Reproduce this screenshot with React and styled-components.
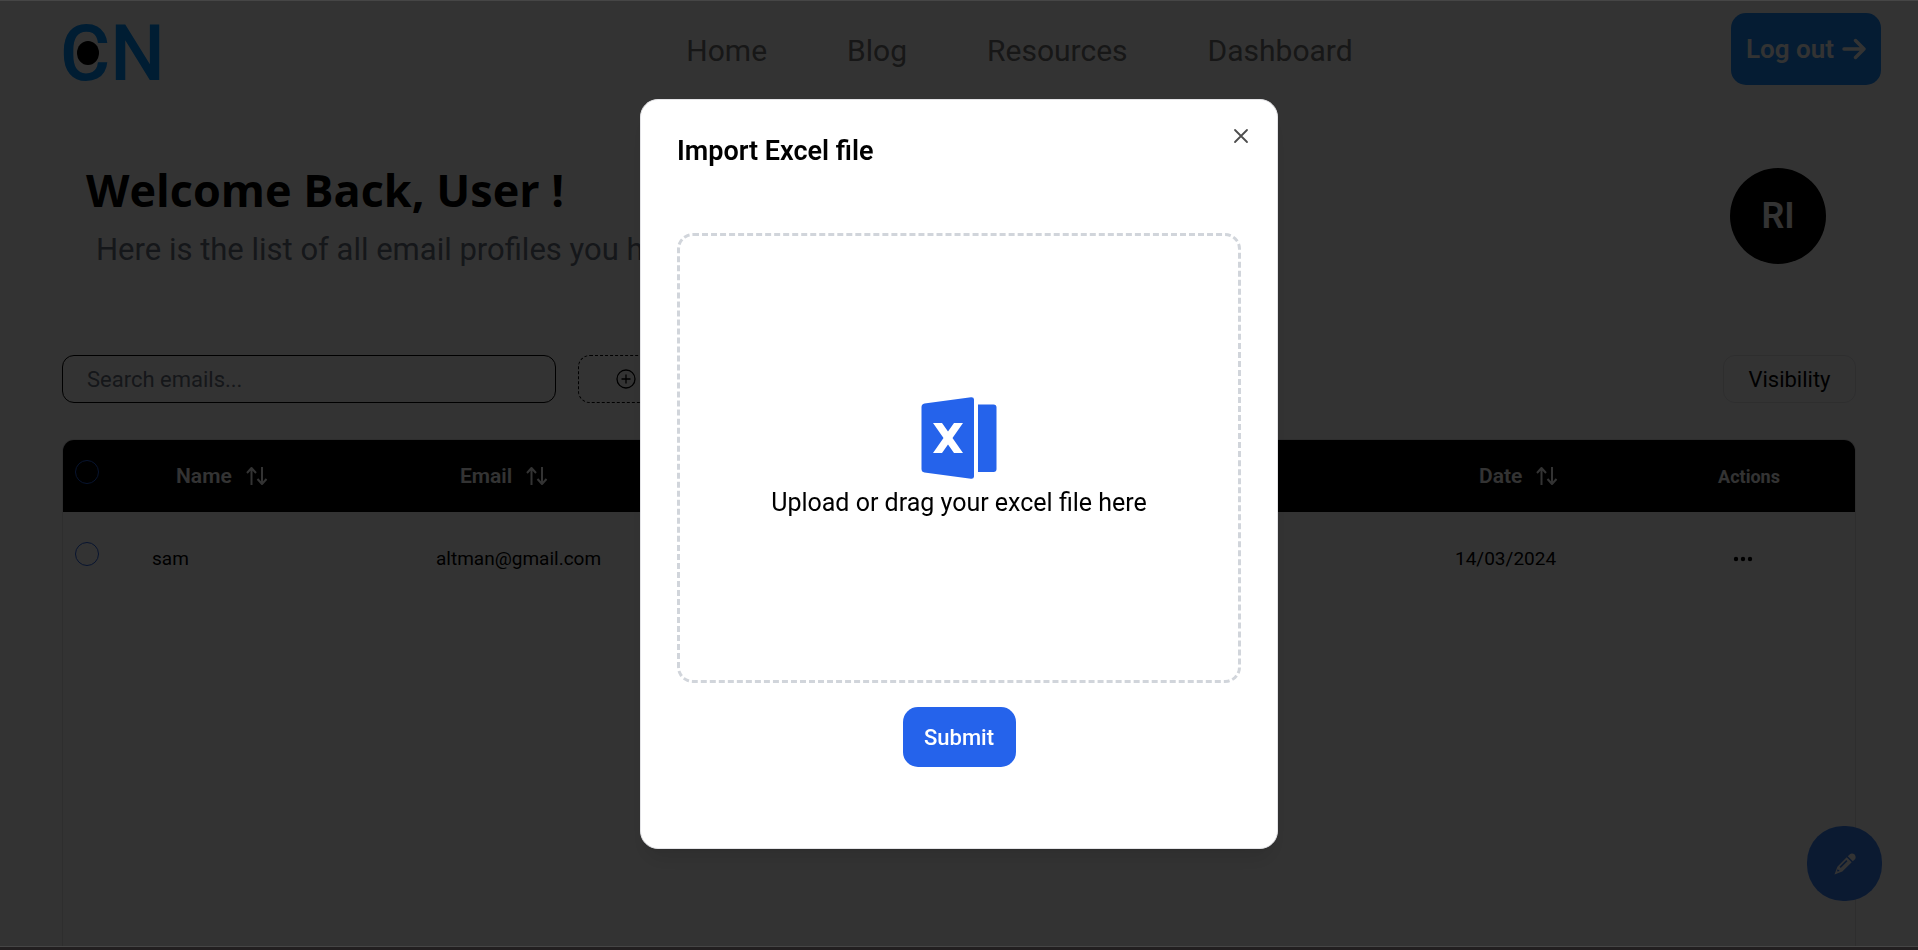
import React from "react";
import styled, { createGlobalStyle } from "styled-components";

const GlobalStyle = createGlobalStyle`
  *, *::before, *::after { box-sizing: border-box; }
  body {
    margin: 0;
    background: #fff;
    color: #000;
    font-family: Roboto, "Liberation Sans", sans-serif;
  }
  button, input { font: inherit; color: inherit; }
  h1, h2, p { margin: 0; }
`;

const Page = styled.div`
  height: 100vh;
  overflow: hidden;
  display: flex;
`;

const Shell = styled.div`
  flex: 1;
  display: flex;
  flex-direction: column;
  background: #fff;
`;

const NavBar = styled.header`
  display: flex;
  justify-content: space-between;
  align-items: center;
  height: 98px;
  padding: 0 37px 0 60px;
`;

const LogoSlot = styled.div`
  width: 248px;
  padding-top: 9px;
`;

const Logo = styled.a`
  position: relative;
  display: inline-block;
  color: #0091ff;
  font-size: 77px;
  line-height: 80px;
  font-weight: 500;
  text-decoration: none;
`;

const Pupil = styled.span`
  position: absolute;
  left: 17px;
  top: 27px;
  width: 22px;
  height: 24px;
  border-radius: 50%;
  background: #000;
`;

const NavLinks = styled.nav`
  display: flex;
  gap: 80px;
  padding-top: 4px;
`;

const NavLink = styled.a`
  color: #737373;
  font-size: 30px;
  line-height: 36px;
  text-decoration: none;
`;

const LogoutButton = styled.button`
  display: flex;
  align-items: center;
  justify-content: center;
  gap: 8px;
  width: 150px;
  height: 72px;
  padding: 0;
  border: 0;
  border-radius: 15px;
  background: #1a8cff;
  color: #fff;
  font-size: 26px;
  font-weight: 600;
  white-space: nowrap;
`;

const Main = styled.main`
  flex: 1;
  display: flex;
  flex-direction: column;
  padding: 0 62px;
`;

const Welcome = styled.section`
  display: flex;
  justify-content: space-between;
  align-items: flex-start;
  padding: 62px 30px 0 24px;
  height: 257px;
`;

const Title = styled.h1`
  font-family: "Open Sans", "Noto Sans", sans-serif;
  font-size: 45px;
  line-height: 60px;
  font-weight: 700;
`;

const Subtitle = styled.p`
  padding-left: 10px;
  color: #6b7280;
  font-size: 31px;
  line-height: 60px;
`;

const Avatar = styled.div`
  display: grid;
  place-items: center;
  width: 96px;
  height: 96px;
  margin-top: 8px;
  border-radius: 50%;
  background: #000;
  color: #fff;
  font-size: 36px;
  font-weight: 600;
`;

const Toolbar = styled.div`
  display: flex;
  gap: 22px;
  height: 48px;
`;

const Search = styled.input`
  width: 494px;
  border: 1px solid #000;
  border-radius: 12px;
  padding: 0 24px;
  background: #fff;
  font-size: 22px;
  outline: none;
  &::placeholder { color: #6b7280; opacity: 1; }
`;

const FilterButton = styled.button`
  display: flex;
  align-items: center;
  padding: 0 37px;
  border: 1px dashed #000;
  border-radius: 12px;
  background: #fff;
`;

const VisibilityButton = styled.button`
  margin-left: auto;
  width: 133px;
  border: 1px solid #e4e4e7;
  border-radius: 12px;
  background: #fff;
  font-size: 22px;
`;

const TableFrame = styled.div`
  flex: 1;
  margin-top: 36px;
  border: 1px solid #e4e4e7;
  border-bottom: 0;
  border-radius: 12px 12px 0 0;
  overflow: hidden;
`;

const Table = styled.table`
  width: 100%;
  table-layout: fixed;
  border-collapse: collapse;
`;

const Col = styled.col`
  width: ${(p) => p.$width};
`;

const HeadRow = styled.tr`
  height: 72px;
  background: #000;
  color: #fff;
`;

const HeadCell = styled.th`
  padding: 0 12px;
  text-align: ${(p) => p.$align || "left"};
  font-size: 18px;
  font-weight: 700;
`;

const SortButton = styled.button`
  display: flex;
  align-items: center;
  gap: 13px;
  padding: 0 24px;
  border: 0;
  background: none;
  font-size: 21px;
  font-weight: 600;
`;

const BodyRow = styled.tr`
  height: 92px;
`;

const Cell = styled.td`
  padding: 0 12px;
  text-align: ${(p) => p.$align || "left"};
  font-size: 19px;
`;

const Check = styled.input`
  appearance: none;
  display: block;
  width: 24px;
  height: 24px;
  margin: 0 0 8px;
  border: 1px solid #2563eb;
  border-radius: 50%;
`;

const MoreButton = styled.button`
  display: inline-flex;
  padding: 0;
  border: 0;
  background: none;
  vertical-align: middle;
  margin-right: 12px;
`;

const Fab = styled.button`
  position: fixed;
  right: 36px;
  bottom: 49px;
  display: grid;
  place-items: center;
  width: 75px;
  height: 75px;
  border: 0;
  border-radius: 36px;
  background: #3b82f6;
  color: #fff;
`;

const Overlay = styled.div`
  position: fixed;
  inset: 0;
  display: grid;
  place-items: center;
  padding-bottom: 2px;
  background: rgba(0, 0, 0, 0.8);
  box-shadow: inset 0 1px #464646, inset 0 -3px #221f20, inset 0 -4px #464646;
`;

const Dialog = styled.section`
  position: relative;
  display: flex;
  flex-direction: column;
  align-items: center;
  width: 638px;
  max-width: 100%;
  height: 750px;
  padding: 33px 36px;
  border: 1px solid #e4e4e7;
  border-radius: 18px;
  background: #fff;
  box-shadow: 0 15px 22px -4px rgba(0, 0, 0, 0.1), 0 6px 9px -6px rgba(0, 0, 0, 0.1);
`;

const DialogTitle = styled.h2`
  align-self: stretch;
  font-size: 27px;
  line-height: 36px;
  font-weight: 600;
`;

const CloseButton = styled.button`
  position: absolute;
  top: 24px;
  right: 24px;
  display: grid;
  padding: 0;
  border: 0;
  background: none;
  color: #4d4d4d;
`;

const DropZone = styled.label`
  align-self: stretch;
  display: flex;
  flex-direction: column;
  align-items: center;
  justify-content: center;
  gap: 8px;
  height: 450px;
  margin-top: 64px;
  border: 3px dashed #d1d5db;
  border-radius: 16px;
  font-size: 25px;
  line-height: 32px;
`;

const FileInput = styled.input`
  position: absolute;
  width: 1px;
  height: 1px;
  opacity: 0;
`;

const SubmitButton = styled.button`
  width: 113px;
  height: 60px;
  margin-top: 24px;
  padding: 0;
  border: 0;
  border-radius: 15px;
  background: #2563eb;
  color: #fff;
  font-size: 22px;
  font-weight: 500;
`;

const ArrowIcon = () => (
  <svg width="24" height="24" viewBox="0 0 24 24" fill="none" stroke="currentColor" strokeWidth="3.400" strokeLinecap="round" strokeLinejoin="round" aria-hidden="true">
    <path d="M2 12H22M13.500 3.500L22 12L13.500 20.500" />
  </svg>
);

const SortIcon = () => (
  <svg width="24" height="24" viewBox="0 0 24 24" fill="none" stroke="currentColor" strokeWidth="2" strokeLinejoin="round" aria-hidden="true">
    <path d="M6.500 21V4M2 9L6.500 4L11 9M17 3V20M12.500 15L17 20L21.500 15" />
  </svg>
);

const PlusCircleIcon = () => (
  <svg width="20" height="22" viewBox="0 0 20 22" fill="none" stroke="currentColor" strokeWidth="1.300" aria-hidden="true">
    <circle cx="10" cy="11" r="9" />
    <path d="M10 6.500V15.500M5.500 11H14.500" />
  </svg>
);

const DotsIcon = () => (
  <svg width="20" height="6" viewBox="0 0 20 6" fill="currentColor" aria-hidden="true">
    <circle cx="3" cy="3" r="2.200" />
    <circle cx="10" cy="3" r="2.200" />
    <circle cx="17" cy="3" r="2.200" />
  </svg>
);

const CloseIcon = () => (
  <svg width="24" height="24" viewBox="0 0 24 24" fill="none" stroke="currentColor" strokeWidth="1.800" strokeLinecap="round" aria-hidden="true">
    <path d="M6 6L18 18M18 6L6 18" />
  </svg>
);

const ExcelIcon = () => (
  <svg width="76" height="82" viewBox="0 0 76 82" fill="#2563eb" aria-hidden="true">
    <path
      fillRule="evenodd"
      d="M3.500 6.500L50 0.200Q53 0 53 2.500V79.500Q53 82 50 81.800L3.500 75.500Q0.500 75 0.500 72V10Q0.500 7 3.500 6.500ZM12 26L22.500 41L12 56H21L27 47.500L33 56H42L31.500 41L42 26H33L27 34.500L21 26Z"
    />
    <path d="M57 7.500H72.500Q75.500 7.500 75.500 10.500V72Q75.500 75 72.500 75H57Z" />
  </svg>
);

const PencilIcon = () => (
  <svg width="22" height="22" viewBox="0 0 22 22" fill="currentColor" aria-hidden="true">
    <path d="M13.800 3.200L16.200 0.900Q18.300 -0.200 20.600 1.500Q22.300 3.900 21.200 5.900L18.800 8.200Z" />
    <path
      fillRule="evenodd"
      d="M12.700 4.300L17.700 9.300L8.300 18.600L0.500 21.500L3.400 13.700ZM12.300 7L5.500 13.800L6.700 15L13.500 8.200ZM3.500 16.200L3 18.200L4.200 18.500L5.600 17.600Z"
    />
  </svg>
);

export default function App() {
  return (
    <>
      <GlobalStyle />
      <Page>
        <Shell>
          <NavBar>
            <LogoSlot>
              <Logo href="#">
                CN
                <Pupil />
              </Logo>
            </LogoSlot>
            <NavLinks>
              {["Home", "Blog", "Resources", "Dashboard"].map((name) => (
                <NavLink href="#" key={name}>{name}</NavLink>
              ))}
            </NavLinks>
            <LogoutButton type="button">
              Log out
              <ArrowIcon />
            </LogoutButton>
          </NavBar>
          <Main>
            <Welcome>
              <div>
                <Title>Welcome Back, User !</Title>
                <Subtitle>Here is the list of all email profiles you have</Subtitle>
              </div>
              <Avatar>RI</Avatar>
            </Welcome>
            <Toolbar>
              <Search type="search" placeholder="Search emails..." aria-label="Search emails" />
              <FilterButton type="button" aria-label="Add filter">
                <PlusCircleIcon />
              </FilterButton>
              <VisibilityButton type="button">Visibility</VisibilityButton>
            </Toolbar>
            <TableFrame>
              <Table>
                <colgroup>
                  <Col $width="77px" />
                  <Col $width="284px" />
                  <Col />
                  <Col $width="200px" />
                  <Col $width="212px" />
                </colgroup>
                <thead>
                  <HeadRow>
                    <HeadCell><Check type="checkbox" aria-label="Select all rows" /></HeadCell>
                    {["Name", "Email", "Date"].map((name) => (
                      <HeadCell key={name}>
                        <SortButton type="button">{name}<SortIcon /></SortButton>
                      </HeadCell>
                    ))}
                    <HeadCell $align="center">Actions</HeadCell>
                  </HeadRow>
                </thead>
                <tbody>
                  <BodyRow>
                    <Cell><Check type="checkbox" aria-label="Select sam" /></Cell>
                    <Cell>sam</Cell>
                    <Cell>altman@gmail.com</Cell>
                    <Cell>14/03/2024</Cell>
                    <Cell $align="center">
                      <MoreButton type="button" aria-label="More actions"><DotsIcon /></MoreButton>
                    </Cell>
                  </BodyRow>
                </tbody>
              </Table>
            </TableFrame>
          </Main>
        </Shell>
      </Page>
      <Fab type="button" aria-label="Compose"><PencilIcon /></Fab>
      <Overlay>
        <Dialog role="dialog" aria-modal="true" aria-labelledby="import-title">
          <DialogTitle id="import-title">Import Excel file</DialogTitle>
          <CloseButton type="button" aria-label="Close"><CloseIcon /></CloseButton>
          <DropZone>
            <ExcelIcon />
            Upload or drag your excel file here
            <FileInput type="file" accept=".xls,.xlsx" />
          </DropZone>
          <SubmitButton type="submit">Submit</SubmitButton>
        </Dialog>
      </Overlay>
    </>
  );
}
